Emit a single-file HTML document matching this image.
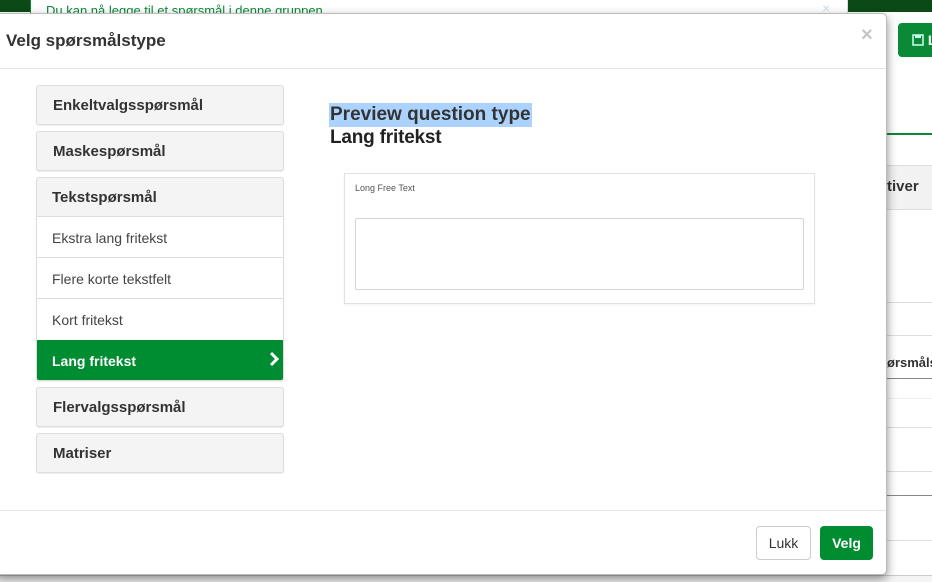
<!DOCTYPE html>
<html><head><meta charset="utf-8"><style>
*{box-sizing:border-box;margin:0;padding:0}
body{width:932px;height:582px;overflow:hidden;position:relative;background:#fff;font-family:"Liberation Sans",sans-serif;color:#333}
.abs{position:absolute}
.hd{height:40px;background:#f4f4f4;border:1px solid #ddd;border-radius:3px;box-shadow:0 1px 1px rgba(0,0,0,.08);padding:11px 0 0 16px;font-size:15px;font-weight:bold;margin-bottom:6px;color:#333}
</style></head><body>
<div class="abs" style="left:0;top:0;width:932px;height:12px;background:#0b4a16"></div>
<div class="abs" style="left:30px;top:0;width:818px;height:14px;background:#fff;border-left:1px solid #0a8a3a;border-right:1px solid #ddd"></div>
<div class="abs" style="left:46px;top:3px;font-size:13px;color:#0a8a3a">Du kan nå legge til et spørsmål i denne gruppen</div>
<div class="abs" style="left:822px;top:0;font-size:14px;color:#cde">×</div>
<div class="abs" style="left:898px;top:23px;width:40px;height:34px;background:#0a8a34;border-radius:4px;color:#fff;font-size:14px;padding:9px 0 0 14px;font-weight:bold">
<svg width="12" height="12" viewBox="0 0 12 12" style="vertical-align:-1px"><rect x="1" y="1" width="10" height="10" fill="none" stroke="#cfe" stroke-width="1.5"/><rect x="3" y="1" width="6" height="3" fill="#cfe"/></svg> L</div>
<div class="abs" style="left:887px;top:133px;width:45px;height:2px;background:#0a8a34"></div>
<div class="abs" style="left:887px;top:165px;width:45px;height:45px;background:#f2f2f2;border-top:1px solid #ddd;border-bottom:1px solid #ddd"></div>
<div class="abs" style="left:887px;top:178px;font-size:15px;font-weight:bold">tiver</div>
<div class="abs" style="left:887px;top:302px;width:45px;height:1px;background:#ddd"></div>
<div class="abs" style="left:887px;top:335px;width:45px;height:1px;background:#ddd"></div>
<div class="abs" style="left:887px;top:355px;font-size:13px;font-weight:bold">ørsmåls</div>
<div class="abs" style="left:887px;top:378px;width:45px;height:1px;background:#888"></div>
<div class="abs" style="left:887px;top:398px;width:45px;height:1px;background:#eee"></div>
<div class="abs" style="left:887px;top:427px;width:45px;height:1px;background:#ddd"></div>
<div class="abs" style="left:887px;top:471px;width:45px;height:1px;background:#ddd"></div>
<div class="abs" style="left:887px;top:495px;width:45px;height:1px;background:#888"></div>
<div class="abs" style="left:887px;top:540px;width:45px;height:1px;background:#ddd"></div>
<div class="abs" style="left:0;top:575px;width:932px;height:7px;background:#f4f4f4;border-top:1px solid #ccc"></div>
<div class="abs" style="left:-6px;top:13px;width:893px;height:562px;background:#fff;border:1px solid #bbb;border-radius:5px;box-shadow:0 4px 10px rgba(0,0,0,.45)"></div>
<div class="abs" style="left:6px;top:31px;font-size:17px;font-weight:bold;color:#333">Velg spørsmålstype</div>
<div class="abs" style="left:861px;top:24px;font-size:20px;font-weight:bold;color:#c4c4c4">×</div>
<div class="abs" style="left:0;top:68px;width:886px;height:1px;background:#e5e5e5"></div>
<div class="abs" style="left:0;top:510px;width:886px;height:1px;background:#e5e5e5"></div>
<div class="abs" style="left:36px;top:85px;width:248px;">
 <div class="hd">Enkeltvalgsspørsmål</div>
 <div class="hd">Maskespørsmål</div>
 <div style="border:1px solid #ddd;border-radius:3px;box-shadow:0 1px 1px rgba(0,0,0,.08);margin-bottom:6px;overflow:hidden">
  <div style="height:39px;background:#f4f4f4;padding:11px 0 0 15px;font-size:15px;font-weight:bold;border-bottom:1px solid #ddd">Tekstspørsmål</div>
  <div style="height:41px;border-bottom:1px solid #ddd;padding:13px 0 0 15px;font-size:14px;color:#444">Ekstra lang fritekst</div>
  <div style="height:41px;border-bottom:1px solid #ddd;padding:13px 0 0 15px;font-size:14px;color:#444">Flere korte tekstfelt</div>
  <div style="height:41px;padding:13px 0 0 15px;font-size:14px;color:#444">Kort fritekst</div>
  <div style="height:40px;background:#008c30;padding:13px 0 0 15px;font-size:14px;color:#fff;font-weight:bold;position:relative">Lang fritekst
   <svg class="abs" style="right:4px;top:11px" width="10" height="16" viewBox="0 0 10 16"><path d="M2 2 L8 8 L2 14" fill="none" stroke="#fff" stroke-width="3"/></svg></div>
 </div>
 <div class="hd">Flervalgsspørsmål</div>
 <div class="hd">Matriser</div>
</div>
<div class="abs" style="left:329px;top:103px;font-size:19px;font-weight:bold;line-height:24px;background:#acd3ff;padding:0 1px;color:#333">Preview question type</div>
<div class="abs" style="left:330px;top:126px;font-size:19px;line-height:24px;color:#222;font-weight:bold;letter-spacing:-0.2px">Lang fritekst</div>
<div class="abs" style="left:344px;top:173px;width:471px;height:131px;border:1px solid #e2e2e2;box-shadow:0 1px 2px rgba(0,0,0,.06)"></div>
<div class="abs" style="left:355px;top:183px;font-size:9px;color:#555">Long Free Text</div>
<div class="abs" style="left:355px;top:218px;width:449px;height:72px;border:1px solid #d4d4d4;border-radius:2px"></div>
<div class="abs" style="left:756px;top:526px;width:55px;height:34px;border:1px solid #ccc;border-radius:4px;font-size:14px;text-align:center;line-height:32px;color:#333">Lukk</div>
<div class="abs" style="left:820px;top:526px;width:53px;height:34px;background:#008c30;border-radius:4px;font-size:14px;font-weight:bold;text-align:center;line-height:34px;color:#fff">Velg</div>
</body></html>
